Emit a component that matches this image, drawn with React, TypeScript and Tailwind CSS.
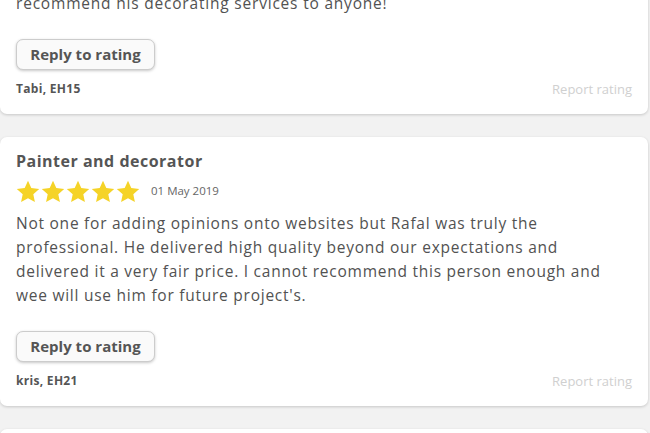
import React from "react";

const font = { fontFamily: '"Open Sans", "Noto Sans", sans-serif' };

function Star() {
  return (
    <svg width="24" height="23" viewBox="0 0 24 23" className="shrink-0">
      <path
        d="M12 0.8l3.3 7.2 7.9 0.9-5.9 5.4 1.6 7.8L12 18.2l-6.9 3.9 1.6-7.8L0.8 8.9l7.9-0.9z"
        fill="#f5d327"
      />
    </svg>
  );
}

function Footer({ name }: { name: string }) {
  return (
    <>
      <button className="mt-6 h-[31px] w-[139px] rounded-[7px] border border-[#cccccc] bg-[#fafafa] text-[15px] font-bold text-[#555] shadow-[0_1px_3px_rgba(0,0,0,0.22)]">
        Reply to rating
      </button>
      <div className="mt-[11px] flex items-center justify-between leading-4">
        <span className="text-[12px] font-bold tracking-[0.3px] text-[#555]">{name}</span>
        <span className="text-[13px] text-[#d0d0d0]">Report rating</span>
      </div>
    </>
  );
}

export default function App() {
  return (
    <div className="h-[433px] w-[650px] overflow-hidden bg-[#f2f2f2]" style={font}>
      <div className="mt-[-25px] w-[648px] rounded-[7px] bg-white px-4 pb-[17px] pt-4 shadow-[0_1px_3px_rgba(0,0,0,0.18)]">
        <p className="text-[15.5px] leading-6 tracking-[0.8px] text-[#525252]">
          recommend his decorating services to anyone!
        </p>
        <Footer name="Tabi, EH15" />
      </div>

      <div className="mt-[23px] w-[648px] rounded-[7px] bg-white px-4 pb-[17px] pt-4 shadow-[0_1px_3px_rgba(0,0,0,0.18)]">
        <h3 className="text-[16px] font-bold leading-4 tracking-[0.5px] text-[#555]">Painter and decorator</h3>
        <div className="mt-[11px] flex h-[22px] items-center">
          <div className="flex gap-[1px]">
            <Star />
            <Star />
            <Star />
            <Star />
            <Star />
          </div>
          <span className="ml-[11px] text-[11.5px] text-[#666]">01 May 2019</span>
        </div>
        <p className="mt-[9px] text-[15.5px] leading-6 tracking-[0.75px] text-[#525252]">
          Not one for adding opinions onto websites but Rafal was truly the
          <br />
          professional. He delivered high quality beyond our expectations and
          <br />
          delivered it a very fair price. I cannot recommend this person enough and
          <br />
          wee will use him for future project's.
        </p>
        <Footer name="kris, EH21" />
      </div>

      <div className="mt-[23px] h-[60px] w-[648px] rounded-[7px] bg-white shadow-[0_1px_3px_rgba(0,0,0,0.18)]" />
    </div>
  );
}
